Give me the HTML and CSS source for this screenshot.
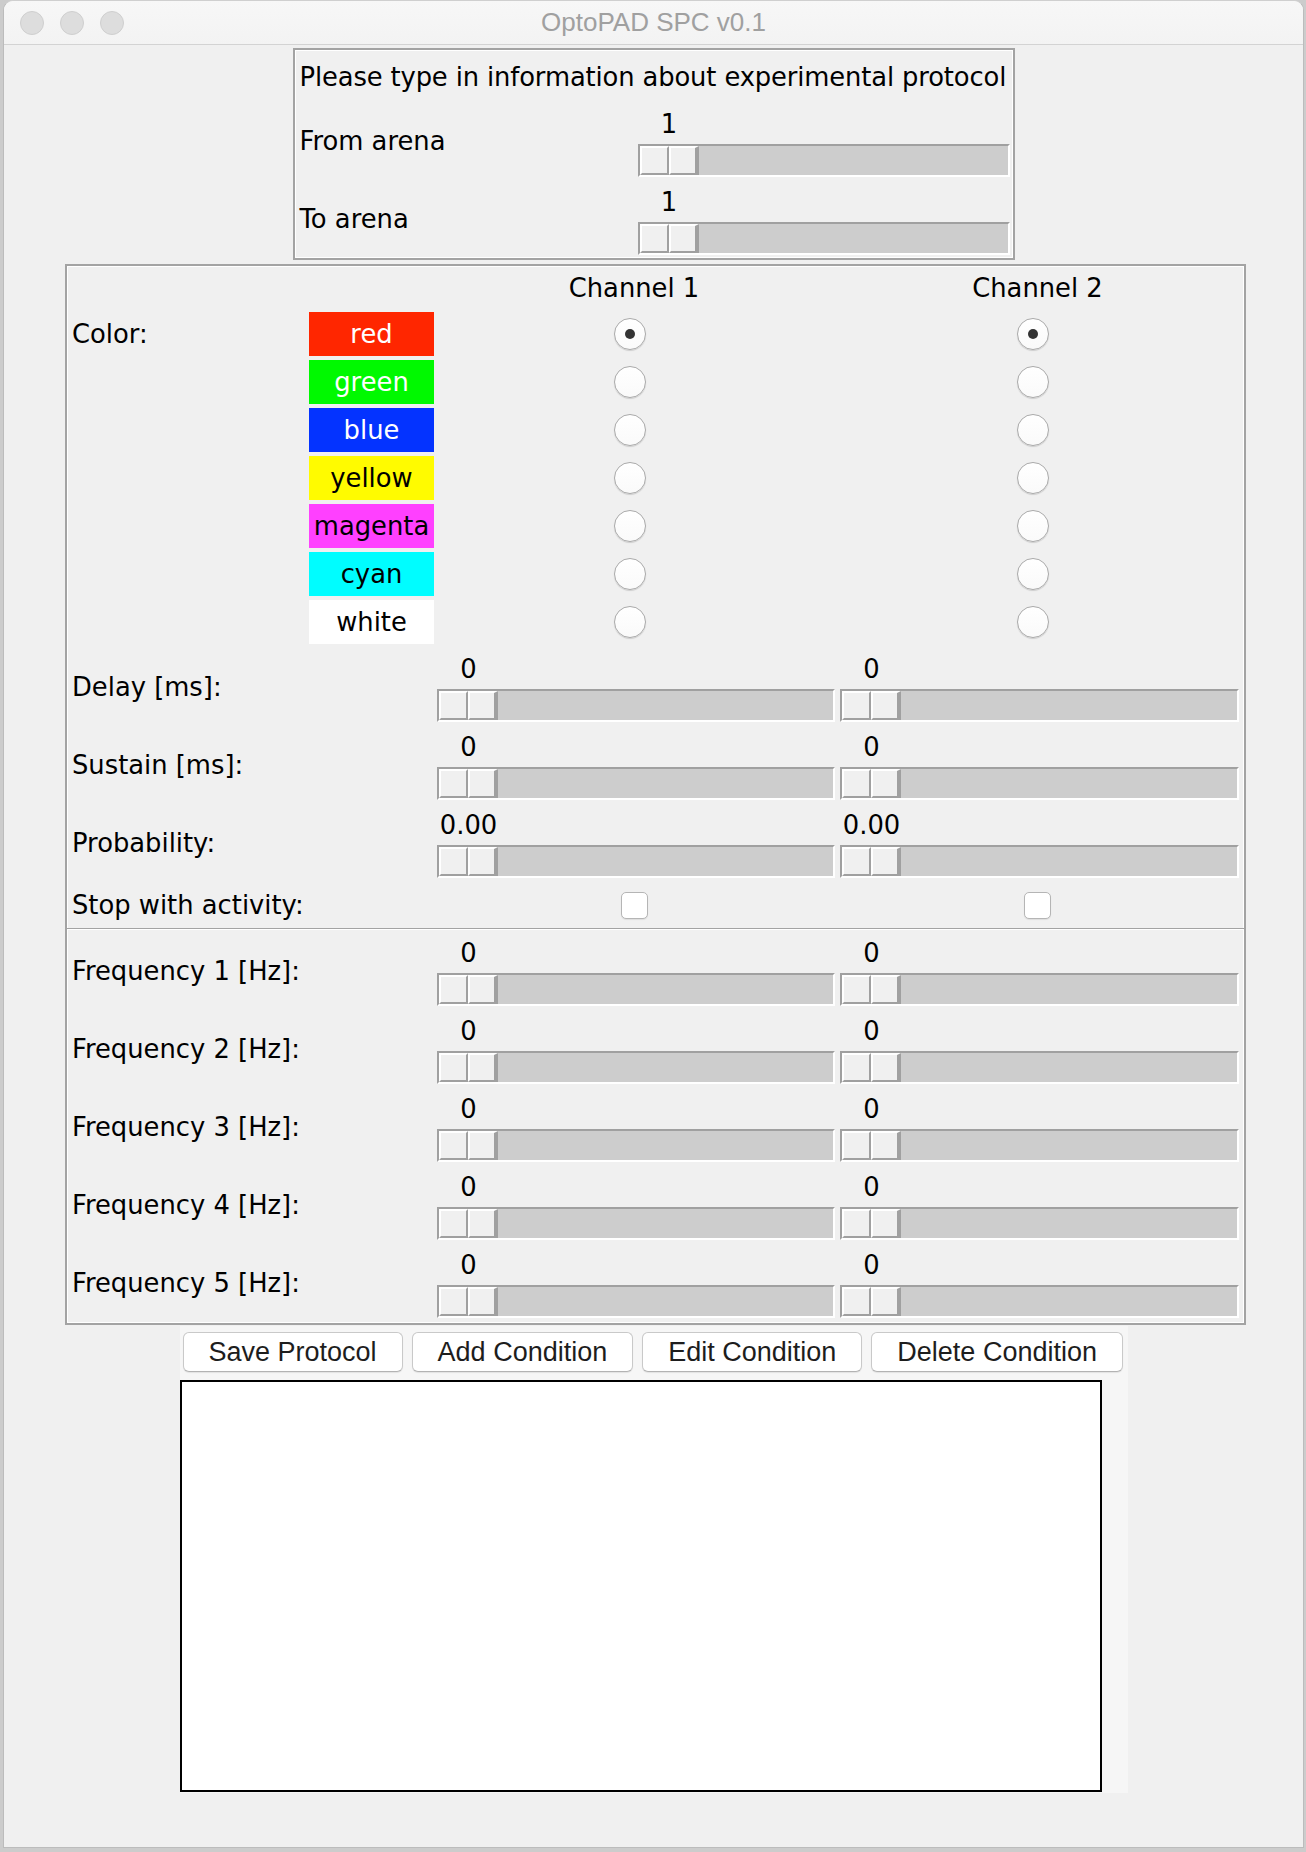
FILE: index.html
```html
<!DOCTYPE html>
<html>
<head>
<meta charset="utf-8">
<title>OptoPAD SPC v0.1</title>
<link rel="stylesheet" href="styles.css">
</head>
<body>
<div class="window">
  <div class="titlebar">
    <div class="lights"><span class="light"></span><span class="light"></span><span class="light"></span></div>
    <div class="title">OptoPAD SPC v0.1</div>
    <div></div>
  </div>
  <div class="content">
    <div class="group top-box">
      <div class="intro">Please type in information about experimental protocol</div>
      <div class="arow">
        <div class="alabel">From arena</div>
        <div class="scale wide"><div class="val">1</div><div class="trough"><div class="thumb"><i></i><i></i></div></div></div>
      </div>
      <div class="arow second">
        <div class="alabel">To arena</div>
        <div class="scale wide"><div class="val">1</div><div class="trough"><div class="thumb"><i></i><i></i></div></div></div>
      </div>
    </div>

    <div class="group main-box">
      <div class="hrow">
        <div class="lab-wide"></div>
        <div class="cell center">Channel 1</div>
        <div class="cell center">Channel 2</div>
      </div>

      <div class="crow">
        <div class="lab">Color:</div>
        <div class="sw sw-red">red</div>
        <div class="cell radio-cell"><span class="radio on"></span></div>
        <div class="cell radio-cell"><span class="radio on"></span></div>
      </div>
      <div class="crow">
        <div class="lab"></div>
        <div class="sw sw-green">green</div>
        <div class="cell radio-cell"><span class="radio"></span></div>
        <div class="cell radio-cell"><span class="radio"></span></div>
      </div>
      <div class="crow">
        <div class="lab"></div>
        <div class="sw sw-blue">blue</div>
        <div class="cell radio-cell"><span class="radio"></span></div>
        <div class="cell radio-cell"><span class="radio"></span></div>
      </div>
      <div class="crow">
        <div class="lab"></div>
        <div class="sw sw-yellow">yellow</div>
        <div class="cell radio-cell"><span class="radio"></span></div>
        <div class="cell radio-cell"><span class="radio"></span></div>
      </div>
      <div class="crow">
        <div class="lab"></div>
        <div class="sw sw-magenta">magenta</div>
        <div class="cell radio-cell"><span class="radio"></span></div>
        <div class="cell radio-cell"><span class="radio"></span></div>
      </div>
      <div class="crow">
        <div class="lab"></div>
        <div class="sw sw-cyan">cyan</div>
        <div class="cell radio-cell"><span class="radio"></span></div>
        <div class="cell radio-cell"><span class="radio"></span></div>
      </div>
      <div class="crow">
        <div class="lab"></div>
        <div class="sw sw-white">white</div>
        <div class="cell radio-cell"><span class="radio"></span></div>
        <div class="cell radio-cell"><span class="radio"></span></div>
      </div>

      <div class="srow first">
        <div class="lab-wide">Delay [ms]:</div>
        <div class="cell scale"><div class="val">0</div><div class="trough"><div class="thumb"><i></i><i></i></div></div></div>
        <div class="cell scale"><div class="val">0</div><div class="trough"><div class="thumb"><i></i><i></i></div></div></div>
      </div>
      <div class="srow">
        <div class="lab-wide">Sustain [ms]:</div>
        <div class="cell scale"><div class="val">0</div><div class="trough"><div class="thumb"><i></i><i></i></div></div></div>
        <div class="cell scale"><div class="val">0</div><div class="trough"><div class="thumb"><i></i><i></i></div></div></div>
      </div>
      <div class="srow">
        <div class="lab-wide">Probability:</div>
        <div class="cell scale"><div class="val">0.00</div><div class="trough"><div class="thumb"><i></i><i></i></div></div></div>
        <div class="cell scale"><div class="val">0.00</div><div class="trough"><div class="thumb"><i></i><i></i></div></div></div>
      </div>
      <div class="krow">
        <div class="lab-wide">Stop with activity:</div>
        <div class="cell check-cell"><span class="check"></span></div>
        <div class="cell check-cell"><span class="check"></span></div>
      </div>

      <div class="sep"></div>

      <div class="srow first-freq">
        <div class="lab-wide">Frequency 1 [Hz]:</div>
        <div class="cell scale"><div class="val">0</div><div class="trough"><div class="thumb"><i></i><i></i></div></div></div>
        <div class="cell scale"><div class="val">0</div><div class="trough"><div class="thumb"><i></i><i></i></div></div></div>
      </div>
      <div class="srow">
        <div class="lab-wide">Frequency 2 [Hz]:</div>
        <div class="cell scale"><div class="val">0</div><div class="trough"><div class="thumb"><i></i><i></i></div></div></div>
        <div class="cell scale"><div class="val">0</div><div class="trough"><div class="thumb"><i></i><i></i></div></div></div>
      </div>
      <div class="srow">
        <div class="lab-wide">Frequency 3 [Hz]:</div>
        <div class="cell scale"><div class="val">0</div><div class="trough"><div class="thumb"><i></i><i></i></div></div></div>
        <div class="cell scale"><div class="val">0</div><div class="trough"><div class="thumb"><i></i><i></i></div></div></div>
      </div>
      <div class="srow">
        <div class="lab-wide">Frequency 4 [Hz]:</div>
        <div class="cell scale"><div class="val">0</div><div class="trough"><div class="thumb"><i></i><i></i></div></div></div>
        <div class="cell scale"><div class="val">0</div><div class="trough"><div class="thumb"><i></i><i></i></div></div></div>
      </div>
      <div class="srow">
        <div class="lab-wide">Frequency 5 [Hz]:</div>
        <div class="cell scale"><div class="val">0</div><div class="trough"><div class="thumb"><i></i><i></i></div></div></div>
        <div class="cell scale"><div class="val">0</div><div class="trough"><div class="thumb"><i></i><i></i></div></div></div>
      </div>
    </div>

    <div class="actions">
      <div class="btns">
        <button class="btn">Save Protocol</button>
        <button class="btn">Add Condition</button>
        <button class="btn">Edit Condition</button>
        <button class="btn">Delete Condition</button>
      </div>
      <div class="listbox"></div>
    </div>
  </div>
</div>
</body>
</html>
```

FILE: styles.css
```css
html, body {
  margin: 0;
  padding: 0;
}
body {
  background: #cccccc;
  font-family: "DejaVu Sans", sans-serif;
  font-size: 25.8px;
  color: #000;
  height: 1852px;
  overflow: hidden;
}

.window {
  margin-left: 3px;
  width: 1301px;
  box-sizing: border-box;
  border: 1px solid #bcbcbc;
  border-top-color: #cfcfcf;
  border-radius: 10px 10px 0 0;
  background: #f0f0f0;
  overflow: hidden;
}

.titlebar {
  height: 43px;
  border-bottom: 1px solid #d3d3d3;
  background: linear-gradient(#f7f7f7, #f3f3f3);
  display: grid;
  grid-template-columns: 1fr auto 1fr;
  align-items: center;
}
.lights {
  display: flex;
  gap: 16px;
  padding-left: 16px;
}
.light {
  width: 22px;
  height: 22px;
  border-radius: 50%;
  background: #dddddd;
  border: 1px solid #cfcfcf;
}
.title {
  font-family: "Liberation Sans", Arial, sans-serif;
  font-size: 26px;
  color: #a0a0a0;
}

.content {
  display: flex;
  flex-direction: column;
  align-items: center;
  padding: 3px 0 54px;
}

.group {
  box-sizing: border-box;
  border: 2px solid #a3a3a3;
  box-shadow: inset 0 0 0 1px #ffffff;
}

/* top box */
.top-box {
  width: 722px;
  height: 212px;
  padding: 12px 3px 3px 5px;
}
.intro {
  height: 30px;
  line-height: 30px;
  white-space: nowrap;
  letter-spacing: -0.13px;
}
.arow {
  display: flex;
  align-items: center;
  margin-top: 17px;
}
.arow.second {
  margin-top: 10px;
}
.alabel {
  width: 338px;
  padding-bottom: 4px;
}
.scale.wide {
  width: 372px;
}

/* scale widget */
.scale {
  display: flex;
  flex-direction: column;
}
.val {
  width: 59px;
  margin-left: 2px;
  height: 30px;
  line-height: 30px;
  text-align: center;
  white-space: nowrap;
  margin-bottom: 5px;
}
.trough {
  height: 33px;
  box-sizing: border-box;
  border-top: 2px solid #a0a0a0;
  border-left: 2px solid #a0a0a0;
  border-bottom: 2px solid #ffffff;
  border-right: 2px solid #ffffff;
  background: #cdcdcd;
  display: flex;
}
.thumb {
  display: flex;
  height: 100%;
}
.thumb i {
  display: block;
  width: 29px;
  height: 100%;
  box-sizing: border-box;
  border-top: 2px solid #ffffff;
  border-left: 2px solid #ffffff;
  border-bottom: 2px solid #a0a0a0;
  border-right: 2px solid #a0a0a0;
  background: #f0f0f0;
}
.thumb i + i {
  width: 30px;
  border-right-width: 4px;
}

/* main box */
.main-box {
  width: 1181px;
  margin-left: 4px;
  margin-top: 4px;
  padding: 0 5px 5px 5px;
}
.hrow, .crow, .srow, .krow {
  display: flex;
}
.hrow {
  height: 44px;
  align-items: center;
  margin-bottom: 2px;
}
.lab-wide {
  width: 365px;
  flex: none;
  white-space: nowrap;
}
.lab {
  width: 237px;
  flex: none;
  align-self: center;
}
.cell {
  flex: none;
  width: 398px;
}
.cell + .cell {
  margin-left: 5px;
  width: 399px;
}
.center {
  text-align: center;
  padding-right: 4px;
  box-sizing: border-box;
}

.crow {
  height: 44px;
  align-items: center;
  margin-bottom: 4px;
}
.sw {
  width: 125px;
  height: 44px;
  line-height: 44px;
  text-align: center;
  margin-right: 3px;
  flex: none;
}
.sw-red { background: #ff2600; color: #ffffff; }
.sw-green { background: #00f900; color: #ffffff; }
.sw-blue { background: #0433ff; color: #ffffff; }
.sw-yellow { background: #fffb00; color: #000000; }
.sw-magenta { background: #ff40ff; color: #000000; }
.sw-cyan { background: #00fdff; color: #000000; }
.sw-white { background: #ffffff; color: #000000; }

.radio-cell {
  display: flex;
  justify-content: center;
  padding-right: 13px;
  box-sizing: border-box;
}
.radio {
  width: 32px;
  height: 32px;
  border-radius: 50%;
  box-sizing: border-box;
  border: 1px solid #aaaaaa;
  background: linear-gradient(#ffffff, #fafafa);
  box-shadow: 0 1px 1px rgba(0, 0, 0, 0.14);
  display: flex;
  align-items: center;
  justify-content: center;
}
.radio.on::after {
  content: "";
  width: 10px;
  height: 10px;
  border-radius: 50%;
  background: #333333;
}

.srow {
  height: 68px;
  align-items: center;
  margin-top: 10px;
}
.srow.first {
  margin-top: 10px;
}
.srow.first-freq {
  margin-top: 8px;
}
.srow .lab-wide {
  padding-bottom: 3px;
}

.krow {
  height: 34px;
  align-items: center;
  margin-top: 10px;
}
.check-cell {
  display: flex;
  justify-content: center;
  padding-right: 4px;
  box-sizing: border-box;
}
.check {
  width: 27px;
  height: 27px;
  box-sizing: border-box;
  border: 1px solid #b5b5b5;
  border-radius: 5px;
  background: #ffffff;
  box-shadow: 0 1px 1px rgba(0, 0, 0, 0.08);
}

.sep {
  margin: 6px -5px 0;
  height: 1px;
  background: #a3a3a3;
  border-bottom: 1px solid #ffffff;
}

/* actions */
.actions {
  width: 948px;
  margin-top: 1px;
  background: #f6f6f6;
  padding: 6px 0 1px;
}
.btns {
  display: flex;
  gap: 9px;
  padding-left: 3px;
}
.btn {
  height: 40px;
  padding: 0 25px;
  font-family: "Liberation Sans", Arial, sans-serif;
  font-size: 27px;
  color: #1d1d1d;
  background: #ffffff;
  border: 1px solid #c9c9c9;
  border-bottom-color: #b3b3b3;
  border-radius: 6px;
  box-shadow: 0 1px 1px rgba(0, 0, 0, 0.08);
  line-height: 36px;
}
.listbox {
  margin-top: 8px;
  width: 922px;
  height: 412px;
  box-sizing: border-box;
  border: 2px solid #000000;
  background: #ffffff;
}
```
